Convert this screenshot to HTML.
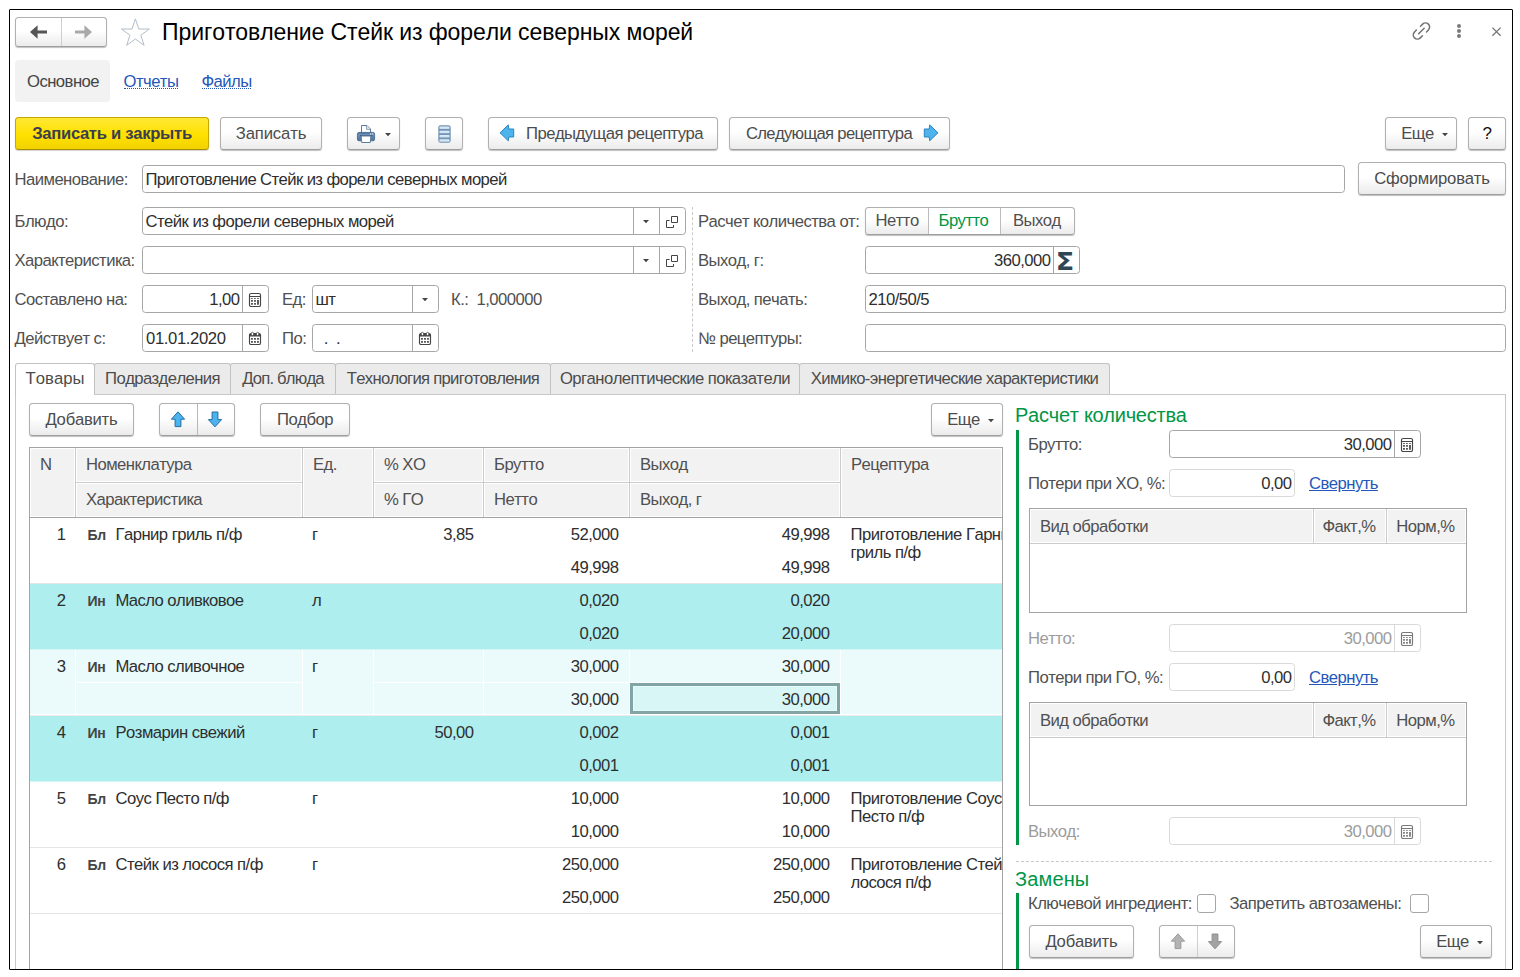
<!DOCTYPE html><html lang="ru"><head><meta charset="utf-8"><title>Приготовление Стейк из форели северных морей</title><style>
html,body{margin:0;padding:0;background:#fff;}
body{width:1520px;height:977px;position:relative;overflow:hidden;font-family:"Liberation Sans",sans-serif;font-size:16.67px;letter-spacing:-0.54px;color:#505050;font-kerning:none;font-variant-ligatures:none;}
.a{position:absolute;box-sizing:border-box;}
.t{white-space:nowrap;}
.frame{left:9px;top:9px;width:1504px;height:961px;border:1px solid #000;border-radius:1px;}
.btn{border:1px solid #b0b0b0;border-bottom-color:#9e9e9e;border-radius:3.5px;background:linear-gradient(#ffffff 0%,#ffffff 45%,#ebebeb 100%);box-shadow:0 1px 1px rgba(0,0,0,.25);text-align:center;white-space:nowrap;color:#4c4c4c;}
.btn.y{background:linear-gradient(#ffe835 0%,#ffe100 55%,#f2d200 100%);border-color:#c4a700;border-bottom-color:#a98f00;font-weight:bold;letter-spacing:-0.3px;color:#3c3e4b;box-shadow:0 1px 1px rgba(0,0,0,.18);}
.inp{border:1px solid #a6a6a6;border-radius:3.5px;background:#fff;color:#2e2e2e;white-space:nowrap;overflow:hidden;padding-left:2.5px;}
.inp.lt{border-color:#d9d9d9;}
.inp.dis{border-color:#d9d9d9;}
.lnk{color:#2557ba;}
.g{color:#009646;}
.blk{color:#2e2e2e;}
.dis{color:#9c9c9c;}
.tab{border:1px solid #c2c2c2;border-bottom:none;background:#ebebeb;text-align:center;white-space:nowrap;color:#4c4c4c;border-radius:3px 3px 0 0;}
.tab.act{background:#fff;}
.hc{background:#f2f2f2;}
.bd{display:inline-block;width:28px;padding-left:1px;font-size:14px;font-weight:bold;color:#454545;letter-spacing:-0.3px;}
svg{overflow:visible;}
</style></head><body>
<div class="a frame" style="left:9px;top:9px;width:1504px;height:961px;"></div>
<div class="a btn " style="left:15px;top:17px;width:92px;height:30px;line-height:29px;"></div>
<div class="a" style="left:61px;top:18px;width:1px;height:28px;background:#cfcfcf"></div>
<svg class="a" style="left:30px;top:25px" width="17" height="14" viewBox="0 0 17 14" ><path d="M0 7 L7.6 0.3 V5.4 H17 V8.6 H7.6 V13.7 Z" fill="#555"/></svg>
<svg class="a" style="left:75px;top:25px" width="17" height="14" viewBox="0 0 17 14" ><path d="M17 7 L9.4 0.3 V5.4 H0 V8.6 H9.4 V13.7 Z" fill="#a9a9a9"/></svg>
<svg class="a" style="left:120px;top:18px" width="31" height="29" viewBox="0 0 31 29" ><path d="M15.4 0.9 L18.8 11 H29.4 L20.8 17.2 L24.1 27.3 L15.4 21 L6.7 27.3 L10 17.2 L1.4 11 H12 Z" fill="#fff" stroke="#b3bcc6" stroke-width="1" stroke-linejoin="miter"/></svg>
<div class="a t " style="left:162px;top:17px;height:30px;line-height:30px;font-size:23px;letter-spacing:-0.09px;color:#000;">Приготовление Стейк из форели северных морей</div>
<svg class="a" style="left:1411px;top:21px" width="21" height="20" viewBox="0 0 21 20" ><g fill="none" stroke="#727272" stroke-width="1.5" stroke-linecap="round"><path d="M9.5 5.2 L11.6 3.1 a4.1 4.1 0 0 1 5.8 5.8 L15.5 10.9"/><path d="M11.4 14.8 L9.3 16.9 a4.1 4.1 0 0 1 -5.8 -5.8 L5.4 9.1"/><path d="M7.6 12.8 L13.2 7.2"/></g></svg>
<div class="a" style="left:1457px;top:23.6px;width:4px;height:4px;border-radius:2px;background:#7a7a7a"></div>
<div class="a" style="left:1457px;top:28.6px;width:4px;height:4px;border-radius:2px;background:#7a7a7a"></div>
<div class="a" style="left:1457px;top:33.6px;width:4px;height:4px;border-radius:2px;background:#7a7a7a"></div>
<svg class="a" style="left:1492px;top:26.5px" width="9" height="9" viewBox="0 0 9 9" ><path d="M0.4 0.6 L8.6 8.8 M8.6 0.6 L0.4 8.8" stroke="#777" stroke-width="1.3" fill="none"/></svg>
<div class="a " style="left:15px;top:60px;width:95px;height:42px;background:#f2f2f2;border-radius:4px;"></div>
<div class="a t " style="left:27px;top:61px;height:42px;line-height:42px;color:#444;">Основное</div>
<div class="a t lnk" style="left:123.5px;top:61px;height:42px;line-height:42px;">Отчеты</div>
<div class="a t lnk" style="left:201.5px;top:61px;height:42px;line-height:42px;">Файлы</div>
<div class="a" style="left:124px;top:88px;width:54px;border-top:1px dotted #2557ba;height:0"></div>
<div class="a" style="left:202px;top:88px;width:49px;border-top:1px dotted #2557ba;height:0"></div>
<div class="a btn y" style="left:15px;top:117px;width:194px;height:33px;line-height:32px;">Записать и закрыть</div>
<div class="a btn " style="left:220px;top:117px;width:102px;height:33px;line-height:32px;letter-spacing:-0.14px;">Записать</div>
<div class="a btn " style="left:347px;top:117px;width:53px;height:33px;line-height:32px;"></div>
<svg class="a" style="left:357px;top:125px" width="18" height="18" viewBox="0 0 18 18" ><path d="M4.5 7.5 V0.5 H10 L13.5 4 V7.5" fill="#fff" stroke="#5f7d9b" stroke-width="1"/><path d="M9.6 0.8 V4.4 H13.2" fill="#e9eff5" stroke="#7d97b0" stroke-width="0.9"/><defs><linearGradient id="pg" x1="0" y1="0" x2="0" y2="1"><stop offset="0" stop-color="#3f638d"/><stop offset="0.25" stop-color="#6a8fb9"/><stop offset="1" stop-color="#4f7299"/></linearGradient></defs><rect x="0.4" y="7.4" width="17.2" height="8.4" rx="1.6" fill="url(#pg)" stroke="#3d618c" stroke-width="0.8"/><rect x="13" y="8.2" width="1.3" height="1.3" rx="0.6" fill="#fff"/><rect x="15.1" y="8.2" width="1.3" height="1.3" rx="0.6" fill="#fff"/><rect x="3" y="10.2" width="12.6" height="1.2" fill="#3a5878"/><path d="M4.2 11 H13.8 L13.3 17.5 H4.7 Z" fill="#fff" stroke="#5f7d9b" stroke-width="1"/></svg>
<svg class="a" style="left:385px;top:132.6px" width="7" height="4" viewBox="0 0 7 4" ><path d="M0 0 H6 L3 3.3 Z" fill="#444"/></svg>
<div class="a btn " style="left:425px;top:117px;width:38px;height:33px;line-height:32px;"></div>
<svg class="a" style="left:438px;top:125px" width="13" height="18" viewBox="0 0 13 18" ><defs><linearGradient id="lg" x1="0" y1="0" x2="0" y2="1"><stop offset="0" stop-color="#e0eefa"/><stop offset="1" stop-color="#c6dcef"/></linearGradient></defs><rect x="0.3" y="0.2" width="12.4" height="17.6" rx="2.2" fill="#7293b3"/><rect x="1.4" y="1.40" width="10.2" height="2.5" rx="0.9" fill="url(#lg)"/><rect x="1.4" y="5.70" width="10.2" height="2.5" rx="0.9" fill="url(#lg)"/><rect x="1.4" y="10.00" width="10.2" height="2.5" rx="0.9" fill="url(#lg)"/><rect x="1.4" y="14.30" width="10.2" height="2.5" rx="0.9" fill="url(#lg)"/></svg>
<div class="a btn " style="left:488px;top:117px;width:230px;height:33px;line-height:32px;padding-left:23px;">Предыдущая рецептура</div>
<svg class="a" style="left:499px;top:124px" width="16" height="18" viewBox="0 0 16 18" ><path d="M1 8.8 L9.3 0.9 L9.8 5 H14.7 V13 H9.8 L9.3 16.8 Z" fill="#4db3ed" stroke="#2a86bf" stroke-width="1" stroke-linejoin="round"/></svg>
<div class="a btn " style="left:729px;top:117px;width:221px;height:33px;line-height:32px;padding-right:21px;letter-spacing:-0.68px;">Следующая рецептура</div>
<svg class="a" style="left:923px;top:124px" width="16" height="18" viewBox="0 0 16 18" ><path d="M15 8.8 L6.7 0.9 L6.2 5 H1.3 V13 H6.2 L6.7 16.8 Z" fill="#4db3ed" stroke="#2a86bf" stroke-width="1" stroke-linejoin="round"/></svg>
<div class="a btn " style="left:1385px;top:117px;width:72px;height:33px;line-height:32px;padding-right:7px;">Еще</div>
<svg class="a" style="left:1442px;top:132.8px" width="7" height="4" viewBox="0 0 7 4" ><path d="M0 0 H6 L3 3.3 Z" fill="#444"/></svg>
<div class="a btn " style="left:1468px;top:117px;width:38px;height:33px;line-height:32px;color:#111;font-size:17px;">?</div>
<div class="a btn " style="left:1358px;top:162px;width:148px;height:33px;line-height:32px;letter-spacing:-0.2px;">Сформировать</div>
<div class="a t " style="left:14.5px;top:166px;height:28px;line-height:28px;">Наименование:</div>
<div class="a inp " style="left:142px;top:165px;width:1203px;height:28px;line-height:28px;letter-spacing:-0.6px;">Приготовление Стейк из форели северных морей</div>
<div class="a t " style="left:14.5px;top:208px;height:28px;line-height:28px;">Блюдо:</div>
<div class="a inp " style="left:142px;top:207px;width:544px;height:28px;line-height:28px;">Стейк из форели северных морей</div>
<div class="a t " style="left:14.5px;top:247px;height:28px;line-height:28px;">Характеристика:</div>
<div class="a inp " style="left:142px;top:246px;width:544px;height:28px;line-height:28px;"></div>
<div class="a" style="left:633px;top:208px;width:1px;height:26px;background:#a6a6a6"></div>
<div class="a" style="left:659px;top:208px;width:1px;height:26px;background:#a6a6a6"></div>
<svg class="a" style="left:643px;top:220.2px" width="7" height="4" viewBox="0 0 7 4" ><path d="M0 0 H6 L3 3.3 Z" fill="#444"/></svg>
<svg class="a" style="left:666px;top:216px" width="12" height="12" viewBox="0 0 12 12" ><path d="M5.5 0.5 H11.5 V6.5 H5.5 Z M3.6 4.5 H0.5 V11.5 H7.5 V9" fill="none" stroke="#444" stroke-width="1"/></svg>
<div class="a" style="left:633px;top:247px;width:1px;height:26px;background:#a6a6a6"></div>
<div class="a" style="left:659px;top:247px;width:1px;height:26px;background:#a6a6a6"></div>
<svg class="a" style="left:643px;top:259.2px" width="7" height="4" viewBox="0 0 7 4" ><path d="M0 0 H6 L3 3.3 Z" fill="#444"/></svg>
<svg class="a" style="left:666px;top:255px" width="12" height="12" viewBox="0 0 12 12" ><path d="M5.5 0.5 H11.5 V6.5 H5.5 Z M3.6 4.5 H0.5 V11.5 H7.5 V9" fill="none" stroke="#444" stroke-width="1"/></svg>
<div class="a t " style="left:14.5px;top:286px;height:28px;line-height:28px;">Составлено на:</div>
<div class="a inp " style="left:142px;top:285px;width:127px;height:28px;line-height:28px;"></div>
<div class="a t blk" style="right:1280.5px;top:286px;height:28px;line-height:28px;">1,00</div>
<div class="a" style="left:242px;top:286px;width:1px;height:26px;background:#a6a6a6"></div>
<svg class="a" style="left:249px;top:293px" width="12" height="14" viewBox="0 0 12 14" ><rect x="0.5" y="0.5" width="11" height="13" rx="1.6" fill="#fff" stroke="#454545" stroke-width="1.15"/><rect x="1" y="3" width="10" height="1" fill="#454545"/><rect x="2.1" y="5" width="1.7" height="0.9" fill="#454545"/><rect x="5.1" y="5" width="1.7" height="0.9" fill="#454545"/><rect x="8.1" y="5" width="1.7" height="0.9" fill="#454545"/><rect x="2.1" y="7" width="1.75" height="1.75" fill="#454545"/><rect x="2.1" y="10" width="1.75" height="1.75" fill="#454545"/><rect x="5.1" y="7" width="1.75" height="1.75" fill="#454545"/><rect x="5.1" y="10" width="1.75" height="1.75" fill="#454545"/><rect x="8.1" y="7" width="1.75" height="4.75" fill="#454545"/></svg>
<div class="a t " style="left:282px;top:286px;height:28px;line-height:28px;">Ед:</div>
<div class="a inp " style="left:312px;top:285px;width:127px;height:28px;line-height:28px;">шт</div>
<div class="a" style="left:412px;top:286px;width:1px;height:26px;background:#a6a6a6"></div>
<svg class="a" style="left:422px;top:298.2px" width="7" height="4" viewBox="0 0 7 4" ><path d="M0 0 H6 L3 3.3 Z" fill="#444"/></svg>
<div class="a t " style="left:451px;top:286px;height:28px;line-height:28px;">К.:&nbsp; 1,000000</div>
<div class="a t " style="left:14.5px;top:325px;height:28px;line-height:28px;">Действует с:</div>
<div class="a inp " style="left:142px;top:324px;width:127px;height:28px;line-height:28px;letter-spacing:-0.38px;padding-left:3px;">01.01.2020</div>
<div class="a" style="left:242px;top:325px;width:1px;height:26px;background:#a6a6a6"></div>
<svg class="a" style="left:249px;top:332px" width="12" height="13" viewBox="0 0 12 13" ><rect x="0.5" y="1.5" width="11" height="11" rx="1.6" fill="#fff" stroke="#454545" stroke-width="1.15"/><path d="M0.5 4.6 V3 a1.6 1.6 0 0 1 1.6 -1.6 H9.9 a1.6 1.6 0 0 1 1.6 1.6 V4.6 Z" fill="#454545"/><rect x="2.3" y="0.3" width="2.2" height="3.3" rx="1.1" fill="#fff" stroke="#454545" stroke-width="0.8"/><rect x="7.5" y="0.3" width="2.2" height="3.3" rx="1.1" fill="#fff" stroke="#454545" stroke-width="0.8"/><rect x="2.1" y="6" width="1.75" height="1.75" fill="#454545"/><rect x="2.1" y="9" width="1.75" height="1.75" fill="#454545"/><rect x="5.1" y="6" width="1.75" height="1.75" fill="#454545"/><rect x="5.1" y="9" width="1.75" height="1.75" fill="#454545"/><rect x="8.1" y="6" width="1.75" height="1.75" fill="#454545"/><rect x="8.1" y="9" width="1.75" height="1.75" fill="#454545"/></svg>
<div class="a t " style="left:282px;top:325px;height:28px;line-height:28px;">По:</div>
<div class="a inp " style="left:312px;top:324px;width:127px;height:28px;line-height:28px;">&nbsp;&nbsp;.&nbsp;&nbsp;.</div>
<div class="a" style="left:412px;top:325px;width:1px;height:26px;background:#a6a6a6"></div>
<svg class="a" style="left:419px;top:332px" width="12" height="13" viewBox="0 0 12 13" ><rect x="0.5" y="1.5" width="11" height="11" rx="1.6" fill="#fff" stroke="#454545" stroke-width="1.15"/><path d="M0.5 4.6 V3 a1.6 1.6 0 0 1 1.6 -1.6 H9.9 a1.6 1.6 0 0 1 1.6 1.6 V4.6 Z" fill="#454545"/><rect x="2.3" y="0.3" width="2.2" height="3.3" rx="1.1" fill="#fff" stroke="#454545" stroke-width="0.8"/><rect x="7.5" y="0.3" width="2.2" height="3.3" rx="1.1" fill="#fff" stroke="#454545" stroke-width="0.8"/><rect x="2.1" y="6" width="1.75" height="1.75" fill="#454545"/><rect x="2.1" y="9" width="1.75" height="1.75" fill="#454545"/><rect x="5.1" y="6" width="1.75" height="1.75" fill="#454545"/><rect x="5.1" y="9" width="1.75" height="1.75" fill="#454545"/><rect x="8.1" y="6" width="1.75" height="1.75" fill="#454545"/><rect x="8.1" y="9" width="1.75" height="1.75" fill="#454545"/></svg>
<div class="a" style="left:692px;top:207px;height:145px;width:0;border-left:1px dashed #c9c9c9"></div>
<div class="a t " style="left:698px;top:208px;height:28px;line-height:28px;">Расчет количества от:</div>
<div class="a t " style="left:698px;top:247px;height:28px;line-height:28px;">Выход, г:</div>
<div class="a t " style="left:698px;top:286px;height:28px;line-height:28px;">Выход, печать:</div>
<div class="a t " style="left:698px;top:325px;height:28px;line-height:28px;">№ рецептуры:</div>
<div class="a btn " style="left:865px;top:207px;width:210px;height:28px;line-height:27px;"></div>
<div class="a " style="left:928px;top:208px;width:73px;height:26px;background:#fff;border-left:1px solid #bdbdbd;border-right:1px solid #bdbdbd;"></div>
<div class="a t " style="left:875.5px;top:207px;height:28px;line-height:28px;">Нетто</div>
<div class="a t g" style="left:938.5px;top:207px;height:28px;line-height:28px;">Брутто</div>
<div class="a t " style="left:1013px;top:207px;height:28px;line-height:28px;">Выход</div>
<div class="a inp " style="left:865px;top:246px;width:215px;height:28px;line-height:28px;"></div>
<div class="a t blk" style="right:469.5px;top:247px;height:28px;line-height:28px;">360,000</div>
<div class="a" style="left:1053px;top:247px;width:1px;height:26px;background:#a6a6a6"></div>
<div class="a t" style="left:1056px;top:248px;width:18px;height:28px;line-height:28px;text-align:center;font-weight:bold;font-size:25px;letter-spacing:0;color:#2f4656;font-family:'DejaVu Sans',sans-serif;transform:scaleX(1.08);">Σ</div>
<div class="a inp " style="left:865px;top:285px;width:641px;height:28px;line-height:28px;">210/50/5</div>
<div class="a inp " style="left:865px;top:324px;width:641px;height:28px;line-height:28px;"></div>
<div class="a " style="left:15px;top:394px;width:1491px;height:586px;border:1px solid #c8c8c8;border-bottom:none;"></div>
<div class="a tab act" style="left:15px;top:363px;width:80px;height:32px;line-height:30px;letter-spacing:0.0px;">Товары</div>
<div class="a tab" style="left:94px;top:363px;width:137px;height:31px;line-height:30px;letter-spacing:-0.6px;">Подразделения</div>
<div class="a tab" style="left:230px;top:363px;width:106px;height:31px;line-height:30px;letter-spacing:-0.8px;">Доп. блюда</div>
<div class="a tab" style="left:335px;top:363px;width:216px;height:31px;line-height:30px;letter-spacing:-0.71px;">Технология приготовления</div>
<div class="a tab" style="left:550px;top:363px;width:250px;height:31px;line-height:30px;letter-spacing:-0.54px;">Органолептические показатели</div>
<div class="a tab" style="left:799px;top:363px;width:311px;height:31px;line-height:30px;letter-spacing:-0.6px;">Химико-энергетические характеристики</div>
<div class="a btn " style="left:29px;top:403px;width:105px;height:33px;line-height:32px;letter-spacing:-0.25px;">Добавить</div>
<div class="a btn " style="left:159px;top:403px;width:76px;height:33px;line-height:32px;"></div>
<div class="a" style="left:197px;top:404px;width:1px;height:31px;background:#b8b8b8"></div>
<svg class="a" style="left:171px;top:411px" width="15" height="17" viewBox="0 0 15 17" ><path d="M7 0.8 L13.6 8.2 H9.9 V15.6 H4.1 V8.2 H0.4 Z" fill="#4db3ed" stroke="#1f6ca6" stroke-width="1" stroke-linejoin="round"/></svg>
<svg class="a" style="left:208px;top:411px" width="15" height="17" viewBox="0 0 15 17" ><path d="M7 15.8 L13.6 8.6 H9.9 V1 H4.1 V8.6 H0.4 Z" fill="#4db3ed" stroke="#1f6ca6" stroke-width="1" stroke-linejoin="round"/></svg>
<div class="a btn " style="left:260px;top:403px;width:90px;height:33px;line-height:32px;">Подбор</div>
<div class="a btn " style="left:931px;top:403px;width:72px;height:33px;line-height:32px;padding-right:7px;">Еще</div>
<svg class="a" style="left:988px;top:418.8px" width="7" height="4" viewBox="0 0 7 4" ><path d="M0 0 H6 L3 3.3 Z" fill="#444"/></svg>
<div class="a " style="left:29px;top:447px;width:974px;height:533px;border:1px solid #a3a3a3;border-bottom:none;background:#fff;"></div>
<div class="a hc" style="left:77px;top:449px;width:224px;height:32px;"></div>
<div class="a hc" style="left:77px;top:484px;width:224px;height:32px;"></div>
<div class="a" style="left:76px;top:482px;width:226px;height:1px;background:#cbcbcb"></div>
<div class="a t " style="left:86px;top:449px;height:32px;line-height:32px;">Номенклатура</div>
<div class="a t " style="left:86px;top:484px;height:32px;line-height:32px;">Характеристика</div>
<div class="a hc" style="left:375px;top:449px;width:107px;height:32px;"></div>
<div class="a hc" style="left:375px;top:484px;width:107px;height:32px;"></div>
<div class="a" style="left:374px;top:482px;width:109px;height:1px;background:#cbcbcb"></div>
<div class="a t " style="left:384px;top:449px;height:32px;line-height:32px;">% ХО</div>
<div class="a t " style="left:384px;top:484px;height:32px;line-height:32px;">% ГО</div>
<div class="a hc" style="left:485px;top:449px;width:143px;height:32px;"></div>
<div class="a hc" style="left:485px;top:484px;width:143px;height:32px;"></div>
<div class="a" style="left:484px;top:482px;width:145px;height:1px;background:#cbcbcb"></div>
<div class="a t " style="left:494px;top:449px;height:32px;line-height:32px;">Брутто</div>
<div class="a t " style="left:494px;top:484px;height:32px;line-height:32px;">Нетто</div>
<div class="a hc" style="left:631px;top:449px;width:208px;height:32px;"></div>
<div class="a hc" style="left:631px;top:484px;width:208px;height:32px;"></div>
<div class="a" style="left:630px;top:482px;width:210px;height:1px;background:#cbcbcb"></div>
<div class="a t " style="left:640px;top:449px;height:32px;line-height:32px;">Выход</div>
<div class="a t " style="left:640px;top:484px;height:32px;line-height:32px;">Выход, г</div>
<div class="a hc" style="left:31px;top:449px;width:43px;height:67px;"></div>
<div class="a t " style="left:40px;top:449px;height:32px;line-height:32px;">N</div>
<div class="a hc" style="left:304px;top:449px;width:68px;height:67px;"></div>
<div class="a t " style="left:313px;top:449px;height:32px;line-height:32px;">Ед.</div>
<div class="a hc" style="left:842px;top:449px;width:159px;height:67px;"></div>
<div class="a t " style="left:851px;top:449px;height:32px;line-height:32px;">Рецептура</div>
<div class="a" style="left:75px;top:448px;width:1px;height:69px;background:#cbcbcb"></div>
<div class="a" style="left:302px;top:448px;width:1px;height:69px;background:#cbcbcb"></div>
<div class="a" style="left:373px;top:448px;width:1px;height:69px;background:#cbcbcb"></div>
<div class="a" style="left:483px;top:448px;width:1px;height:69px;background:#cbcbcb"></div>
<div class="a" style="left:629px;top:448px;width:1px;height:69px;background:#cbcbcb"></div>
<div class="a" style="left:840px;top:448px;width:1px;height:69px;background:#cbcbcb"></div>
<div class="a" style="left:30px;top:517px;width:972px;height:1px;background:#a3a3a3"></div>
<div class="a" style="left:30px;top:583px;width:972px;height:1px;background:#e4e4e4"></div>
<div class="a t blk" style="right:1454.5px;top:518px;height:33px;line-height:33px;">1</div>
<div class="a t blk" style="left:86.5px;top:518px;height:33px;line-height:33px;"><span class="bd">Бл</span>Гарнир гриль п/ф</div>
<div class="a t blk" style="left:312px;top:518px;height:33px;line-height:33px;">г</div>
<div class="a t blk" style="right:1046.5px;top:518px;height:33px;line-height:33px;">3,85</div>
<div class="a t blk" style="right:901.5px;top:518px;height:33px;line-height:33px;">52,000</div>
<div class="a t blk" style="right:901.5px;top:551px;height:33px;line-height:33px;">49,998</div>
<div class="a t blk" style="right:690.5px;top:518px;height:33px;line-height:33px;">49,998</div>
<div class="a t blk" style="right:690.5px;top:551px;height:33px;line-height:33px;">49,998</div>
<div class="a blk" style="left:850.5px;top:526px;width:151.5px;height:40px;overflow:hidden;line-height:18px;white-space:nowrap;">Приготовление Гарнир<br>гриль п/ф</div>
<div class="a " style="left:30px;top:584px;width:972px;height:65px;background:#afeeee;"></div>
<div class="a" style="left:30px;top:649px;width:972px;height:1px;background:#d5f6f6"></div>
<div class="a t blk" style="right:1454.5px;top:584px;height:33px;line-height:33px;">2</div>
<div class="a t blk" style="left:86.5px;top:584px;height:33px;line-height:33px;"><span class="bd">Ин</span>Масло оливковое</div>
<div class="a t blk" style="left:312px;top:584px;height:33px;line-height:33px;">л</div>
<div class="a t blk" style="right:901.5px;top:584px;height:33px;line-height:33px;">0,020</div>
<div class="a t blk" style="right:901.5px;top:617px;height:33px;line-height:33px;">0,020</div>
<div class="a t blk" style="right:690.5px;top:584px;height:33px;line-height:33px;">0,020</div>
<div class="a t blk" style="right:690.5px;top:617px;height:33px;line-height:33px;">20,000</div>
<div class="a " style="left:30px;top:650px;width:972px;height:65px;background:#ebfafa;"></div>
<div class="a" style="left:75px;top:650px;width:1px;height:65px;background:#ffffff"></div>
<div class="a" style="left:302px;top:650px;width:1px;height:65px;background:#ffffff"></div>
<div class="a" style="left:373px;top:650px;width:1px;height:65px;background:#ffffff"></div>
<div class="a" style="left:483px;top:650px;width:1px;height:65px;background:#ffffff"></div>
<div class="a" style="left:629px;top:650px;width:1px;height:65px;background:#ffffff"></div>
<div class="a" style="left:840px;top:650px;width:1px;height:65px;background:#ffffff"></div>
<div class="a" style="left:76px;top:682px;width:226px;height:1px;background:#ffffff"></div>
<div class="a" style="left:374px;top:682px;width:109px;height:1px;background:#ffffff"></div>
<div class="a" style="left:484px;top:682px;width:145px;height:1px;background:#ffffff"></div>
<div class="a" style="left:630px;top:682px;width:210px;height:1px;background:#ffffff"></div>
<div class="a" style="left:30px;top:714px;width:972px;height:1px;background:#ffffff"></div>
<div class="a" style="left:30px;top:715px;width:972px;height:1px;background:#ececec"></div>
<div class="a t blk" style="right:1454.5px;top:650px;height:33px;line-height:33px;">3</div>
<div class="a t blk" style="left:86.5px;top:650px;height:33px;line-height:33px;"><span class="bd">Ин</span>Масло сливочное</div>
<div class="a t blk" style="left:312px;top:650px;height:33px;line-height:33px;">г</div>
<div class="a t blk" style="right:901.5px;top:650px;height:33px;line-height:33px;">30,000</div>
<div class="a t blk" style="right:901.5px;top:683px;height:33px;line-height:33px;">30,000</div>
<div class="a " style="left:630px;top:683px;width:210px;height:31px;border:3px solid #82a4a5;background:#d9f6f6;box-shadow:inset 0 0 0 1px #e4fbfb;"></div>
<div class="a t blk" style="right:690.5px;top:650px;height:33px;line-height:33px;">30,000</div>
<div class="a t blk" style="right:690.5px;top:683px;height:33px;line-height:33px;">30,000</div>
<div class="a " style="left:30px;top:716px;width:972px;height:65px;background:#afeeee;"></div>
<div class="a" style="left:30px;top:781px;width:972px;height:1px;background:#d5f6f6"></div>
<div class="a t blk" style="right:1454.5px;top:716px;height:33px;line-height:33px;">4</div>
<div class="a t blk" style="left:86.5px;top:716px;height:33px;line-height:33px;"><span class="bd">Ин</span>Розмарин свежий</div>
<div class="a t blk" style="left:312px;top:716px;height:33px;line-height:33px;">г</div>
<div class="a t blk" style="right:1046.5px;top:716px;height:33px;line-height:33px;">50,00</div>
<div class="a t blk" style="right:901.5px;top:716px;height:33px;line-height:33px;">0,002</div>
<div class="a t blk" style="right:901.5px;top:749px;height:33px;line-height:33px;">0,001</div>
<div class="a t blk" style="right:690.5px;top:716px;height:33px;line-height:33px;">0,001</div>
<div class="a t blk" style="right:690.5px;top:749px;height:33px;line-height:33px;">0,001</div>
<div class="a" style="left:30px;top:847px;width:972px;height:1px;background:#e4e4e4"></div>
<div class="a t blk" style="right:1454.5px;top:782px;height:33px;line-height:33px;">5</div>
<div class="a t blk" style="left:86.5px;top:782px;height:33px;line-height:33px;"><span class="bd">Бл</span>Соус Песто п/ф</div>
<div class="a t blk" style="left:312px;top:782px;height:33px;line-height:33px;">г</div>
<div class="a t blk" style="right:901.5px;top:782px;height:33px;line-height:33px;">10,000</div>
<div class="a t blk" style="right:901.5px;top:815px;height:33px;line-height:33px;">10,000</div>
<div class="a t blk" style="right:690.5px;top:782px;height:33px;line-height:33px;">10,000</div>
<div class="a t blk" style="right:690.5px;top:815px;height:33px;line-height:33px;">10,000</div>
<div class="a blk" style="left:850.5px;top:790px;width:151.5px;height:40px;overflow:hidden;line-height:18px;white-space:nowrap;">Приготовление Соус<br>Песто п/ф</div>
<div class="a" style="left:30px;top:913px;width:972px;height:1px;background:#e4e4e4"></div>
<div class="a t blk" style="right:1454.5px;top:848px;height:33px;line-height:33px;">6</div>
<div class="a t blk" style="left:86.5px;top:848px;height:33px;line-height:33px;"><span class="bd">Бл</span>Стейк из лосося п/ф</div>
<div class="a t blk" style="left:312px;top:848px;height:33px;line-height:33px;">г</div>
<div class="a t blk" style="right:901.5px;top:848px;height:33px;line-height:33px;">250,000</div>
<div class="a t blk" style="right:901.5px;top:881px;height:33px;line-height:33px;">250,000</div>
<div class="a t blk" style="right:690.5px;top:848px;height:33px;line-height:33px;">250,000</div>
<div class="a t blk" style="right:690.5px;top:881px;height:33px;line-height:33px;">250,000</div>
<div class="a blk" style="left:850.5px;top:856px;width:151.5px;height:40px;overflow:hidden;line-height:18px;white-space:nowrap;">Приготовление Стейк из<br>лосося п/ф</div>
<div class="a t g" style="left:1015px;top:400px;height:30px;line-height:30px;font-size:20px;letter-spacing:-0.25px;">Расчет количества</div>
<div class="a " style="left:1016px;top:430px;width:3px;height:415px;background:#009646;"></div>
<div class="a t " style="left:1028px;top:431px;height:28px;line-height:28px;">Брутто:</div>
<div class="a inp " style="left:1169px;top:430px;width:252px;height:28px;line-height:28px;"></div>
<div class="a t blk" style="right:128.5px;top:431px;height:28px;line-height:28px;">30,000</div>
<div class="a" style="left:1394px;top:431px;width:1px;height:26px;background:#a6a6a6"></div>
<svg class="a" style="left:1401px;top:438px" width="12" height="14" viewBox="0 0 12 14" ><rect x="0.5" y="0.5" width="11" height="13" rx="1.6" fill="#fff" stroke="#454545" stroke-width="1.15"/><rect x="1" y="3" width="10" height="1" fill="#454545"/><rect x="2.1" y="5" width="1.7" height="0.9" fill="#454545"/><rect x="5.1" y="5" width="1.7" height="0.9" fill="#454545"/><rect x="8.1" y="5" width="1.7" height="0.9" fill="#454545"/><rect x="2.1" y="7" width="1.75" height="1.75" fill="#454545"/><rect x="2.1" y="10" width="1.75" height="1.75" fill="#454545"/><rect x="5.1" y="7" width="1.75" height="1.75" fill="#454545"/><rect x="5.1" y="10" width="1.75" height="1.75" fill="#454545"/><rect x="8.1" y="7" width="1.75" height="4.75" fill="#454545"/></svg>
<div class="a t " style="left:1028px;top:470px;height:28px;line-height:28px;">Потери при ХО, %:</div>
<div class="a inp lt" style="left:1169px;top:469px;width:126px;height:28px;line-height:28px;"></div>
<div class="a t blk" style="right:228.5px;top:470px;height:28px;line-height:28px;">0,00</div>
<div class="a t lnk" style="left:1309px;top:470px;height:28px;line-height:28px;text-decoration:underline;">Свернуть</div>
<div class="a " style="left:1029px;top:508px;width:438px;height:105px;border:1px solid #a3a3a3;background:#fff;"></div>
<div class="a hc" style="left:1031px;top:510px;width:281px;height:32px;"></div>
<div class="a hc" style="left:1315px;top:510px;width:70px;height:32px;"></div>
<div class="a hc" style="left:1388px;top:510px;width:77px;height:32px;"></div>
<div class="a" style="left:1313px;top:509px;width:1px;height:34px;background:#cbcbcb"></div>
<div class="a" style="left:1386px;top:509px;width:1px;height:34px;background:#cbcbcb"></div>
<div class="a" style="left:1030px;top:543px;width:436px;height:1px;background:#cbcbcb"></div>
<div class="a t " style="left:1040px;top:509px;height:35px;line-height:35px;">Вид обработки</div>
<div class="a t " style="right:144.5px;top:509px;height:35px;line-height:35px;">Факт,%</div>
<div class="a t " style="right:65.5px;top:509px;height:35px;line-height:35px;">Норм,%</div>
<div class="a t dis" style="left:1028px;top:625px;height:28px;line-height:28px;">Нетто:</div>
<div class="a inp dis" style="left:1169px;top:624px;width:252px;height:28px;line-height:28px;"></div>
<div class="a t dis" style="right:128.5px;top:625px;height:28px;line-height:28px;">30,000</div>
<div class="a" style="left:1394px;top:625px;width:1px;height:26px;background:#d9d9d9"></div>
<svg class="a" style="left:1401px;top:632px" width="12" height="14" viewBox="0 0 12 14" ><rect x="0.5" y="0.5" width="11" height="13" rx="1.6" fill="#fff" stroke="#787878" stroke-width="1.15"/><rect x="1" y="3" width="10" height="1" fill="#787878"/><rect x="2.1" y="5" width="1.7" height="0.9" fill="#787878"/><rect x="5.1" y="5" width="1.7" height="0.9" fill="#787878"/><rect x="8.1" y="5" width="1.7" height="0.9" fill="#787878"/><rect x="2.1" y="7" width="1.75" height="1.75" fill="#787878"/><rect x="2.1" y="10" width="1.75" height="1.75" fill="#787878"/><rect x="5.1" y="7" width="1.75" height="1.75" fill="#787878"/><rect x="5.1" y="10" width="1.75" height="1.75" fill="#787878"/><rect x="8.1" y="7" width="1.75" height="4.75" fill="#787878"/></svg>
<div class="a t " style="left:1028px;top:664px;height:28px;line-height:28px;">Потери при ГО, %:</div>
<div class="a inp lt" style="left:1169px;top:663px;width:126px;height:28px;line-height:28px;"></div>
<div class="a t blk" style="right:228.5px;top:664px;height:28px;line-height:28px;">0,00</div>
<div class="a t lnk" style="left:1309px;top:664px;height:28px;line-height:28px;text-decoration:underline;">Свернуть</div>
<div class="a " style="left:1029px;top:702px;width:438px;height:104px;border:1px solid #a3a3a3;background:#fff;"></div>
<div class="a hc" style="left:1031px;top:704px;width:281px;height:32px;"></div>
<div class="a hc" style="left:1315px;top:704px;width:70px;height:32px;"></div>
<div class="a hc" style="left:1388px;top:704px;width:77px;height:32px;"></div>
<div class="a" style="left:1313px;top:703px;width:1px;height:34px;background:#cbcbcb"></div>
<div class="a" style="left:1386px;top:703px;width:1px;height:34px;background:#cbcbcb"></div>
<div class="a" style="left:1030px;top:737px;width:436px;height:1px;background:#cbcbcb"></div>
<div class="a t " style="left:1040px;top:703px;height:35px;line-height:35px;">Вид обработки</div>
<div class="a t " style="right:144.5px;top:703px;height:35px;line-height:35px;">Факт,%</div>
<div class="a t " style="right:65.5px;top:703px;height:35px;line-height:35px;">Норм,%</div>
<div class="a t dis" style="left:1028px;top:818px;height:28px;line-height:28px;">Выход:</div>
<div class="a inp dis" style="left:1169px;top:817px;width:252px;height:28px;line-height:28px;"></div>
<div class="a t dis" style="right:128.5px;top:818px;height:28px;line-height:28px;">30,000</div>
<div class="a" style="left:1394px;top:818px;width:1px;height:26px;background:#d9d9d9"></div>
<svg class="a" style="left:1401px;top:825px" width="12" height="14" viewBox="0 0 12 14" ><rect x="0.5" y="0.5" width="11" height="13" rx="1.6" fill="#fff" stroke="#787878" stroke-width="1.15"/><rect x="1" y="3" width="10" height="1" fill="#787878"/><rect x="2.1" y="5" width="1.7" height="0.9" fill="#787878"/><rect x="5.1" y="5" width="1.7" height="0.9" fill="#787878"/><rect x="8.1" y="5" width="1.7" height="0.9" fill="#787878"/><rect x="2.1" y="7" width="1.75" height="1.75" fill="#787878"/><rect x="2.1" y="10" width="1.75" height="1.75" fill="#787878"/><rect x="5.1" y="7" width="1.75" height="1.75" fill="#787878"/><rect x="5.1" y="10" width="1.75" height="1.75" fill="#787878"/><rect x="8.1" y="7" width="1.75" height="4.75" fill="#787878"/></svg>
<div class="a" style="left:1016px;top:861px;width:476px;height:0;border-top:1px dashed #c9c9c9"></div>
<div class="a t g" style="left:1015px;top:864px;height:30px;line-height:30px;font-size:20px;letter-spacing:0.15px;">Замены</div>
<div class="a " style="left:1016px;top:893px;width:3px;height:76px;background:#009646;"></div>
<div class="a t " style="left:1028px;top:890px;height:28px;line-height:28px;">Ключевой ингредиент:</div>
<div class="a " style="left:1197px;top:894px;width:19px;height:19px;border:1px solid #a6a6a6;border-radius:3px;background:#fff;"></div>
<div class="a t " style="left:1229.5px;top:890px;height:28px;line-height:28px;">Запретить автозамены:</div>
<div class="a " style="left:1410px;top:894px;width:19px;height:19px;border:1px solid #a6a6a6;border-radius:3px;background:#fff;"></div>
<div class="a btn " style="left:1029px;top:925px;width:105px;height:33px;line-height:32px;letter-spacing:-0.25px;">Добавить</div>
<div class="a btn " style="left:1159px;top:925px;width:76px;height:33px;line-height:32px;"></div>
<div class="a" style="left:1197px;top:926px;width:1px;height:31px;background:#cfcfcf"></div>
<svg class="a" style="left:1171px;top:933px" width="15" height="17" viewBox="0 0 15 17" ><path d="M7 0.8 L13.6 8.2 H9.9 V15.6 H4.1 V8.2 H0.4 Z" fill="#b3b3b3" stroke="#9a9a9a" stroke-width="1" stroke-linejoin="round"/></svg>
<svg class="a" style="left:1208px;top:933px" width="15" height="17" viewBox="0 0 15 17" ><path d="M7 15.8 L13.6 8.6 H9.9 V1 H4.1 V8.6 H0.4 Z" fill="#a3a3a3" stroke="#8e8e8e" stroke-width="1" stroke-linejoin="round"/></svg>
<div class="a btn " style="left:1420px;top:925px;width:72px;height:33px;line-height:32px;padding-right:7px;">Еще</div>
<svg class="a" style="left:1477px;top:940.8px" width="7" height="4" viewBox="0 0 7 4" ><path d="M0 0 H6 L3 3.3 Z" fill="#444"/></svg>
<div class="a " style="left:0px;top:970px;width:1520px;height:7px;background:#fff;"></div>
<div class="a " style="left:10px;top:969px;width:1502px;height:1px;background:#000;"></div>
</body></html>
